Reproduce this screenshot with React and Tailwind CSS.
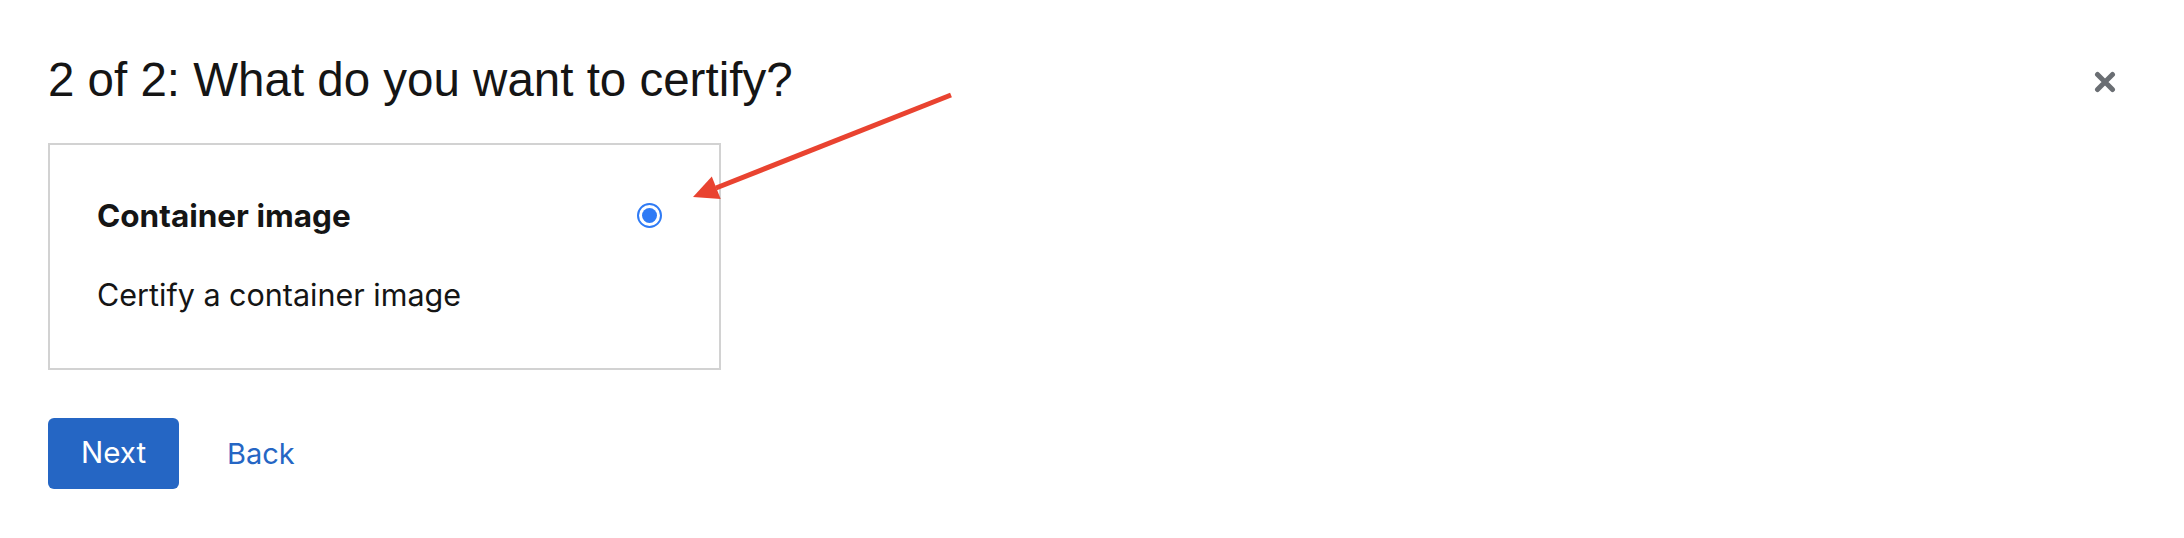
import React from "react";

export default function App() {
  return (
    <div className="relative w-full h-[538px] bg-white overflow-hidden" style={{ fontFamily: "Inter, 'Liberation Sans', sans-serif" }}>
      <div className="flex items-start justify-between pl-[48px] pr-[68px] pt-[56px]">
        <h1 className="text-[47.5px] leading-none font-normal text-[#151515]" style={{ fontFamily: "'Liberation Sans', Arial, sans-serif" }}>
          2 of 2: What do you want to certify?
        </h1>
        <button className="mt-[15px] w-[22px] h-[22px] flex items-center justify-center" aria-label="Close">
          <svg width="22" height="22" viewBox="0 0 22 22">
            <path d="M3.5 3.5 L18.5 18.5 M18.5 3.5 L3.5 18.5" stroke="#6a6e73" strokeWidth="5" strokeLinecap="round" fill="none" />
          </svg>
        </button>
      </div>

      <div className="pl-[48px]">
        <div className="mt-[39px] w-[673px] border-2 border-[#d2d2d2] pt-[53px] pb-[55px] pl-[47px] pr-[57px]">
          <div className="flex items-center justify-between h-[36px]">
            <span className="text-[31.5px] leading-[36px] font-bold text-[#151515]">Container image</span>
            <span className="w-[25px] h-[25px] rounded-full border-[2.5px] border-[#2f7bf5] flex items-center justify-center">
              <span className="w-[15px] h-[15px] rounded-full bg-[#2f7bf5]"></span>
            </span>
          </div>
          <p className="mt-[43px] text-[30.5px] leading-[36px] text-[#151515]">Certify a container image</p>
        </div>

        <div className="mt-[48px] flex items-center">
          <button className="w-[131px] h-[71px] rounded-[6px] bg-[#2566c4] text-white text-[29.5px] leading-none flex items-center justify-center">
            Next
          </button>
          <button className="ml-[48px] text-[29px] leading-none text-[#2566c4]">Back</button>
        </div>
      </div>

      <svg className="absolute left-0 top-0 pointer-events-none" width="2184" height="538">
        <line x1="951" y1="95" x2="716" y2="188" stroke="#e94330" strokeWidth="5" />
        <polygon points="693,197 711.8,176.6 720.7,199" fill="#e94330" />
      </svg>
    </div>
  );
}
